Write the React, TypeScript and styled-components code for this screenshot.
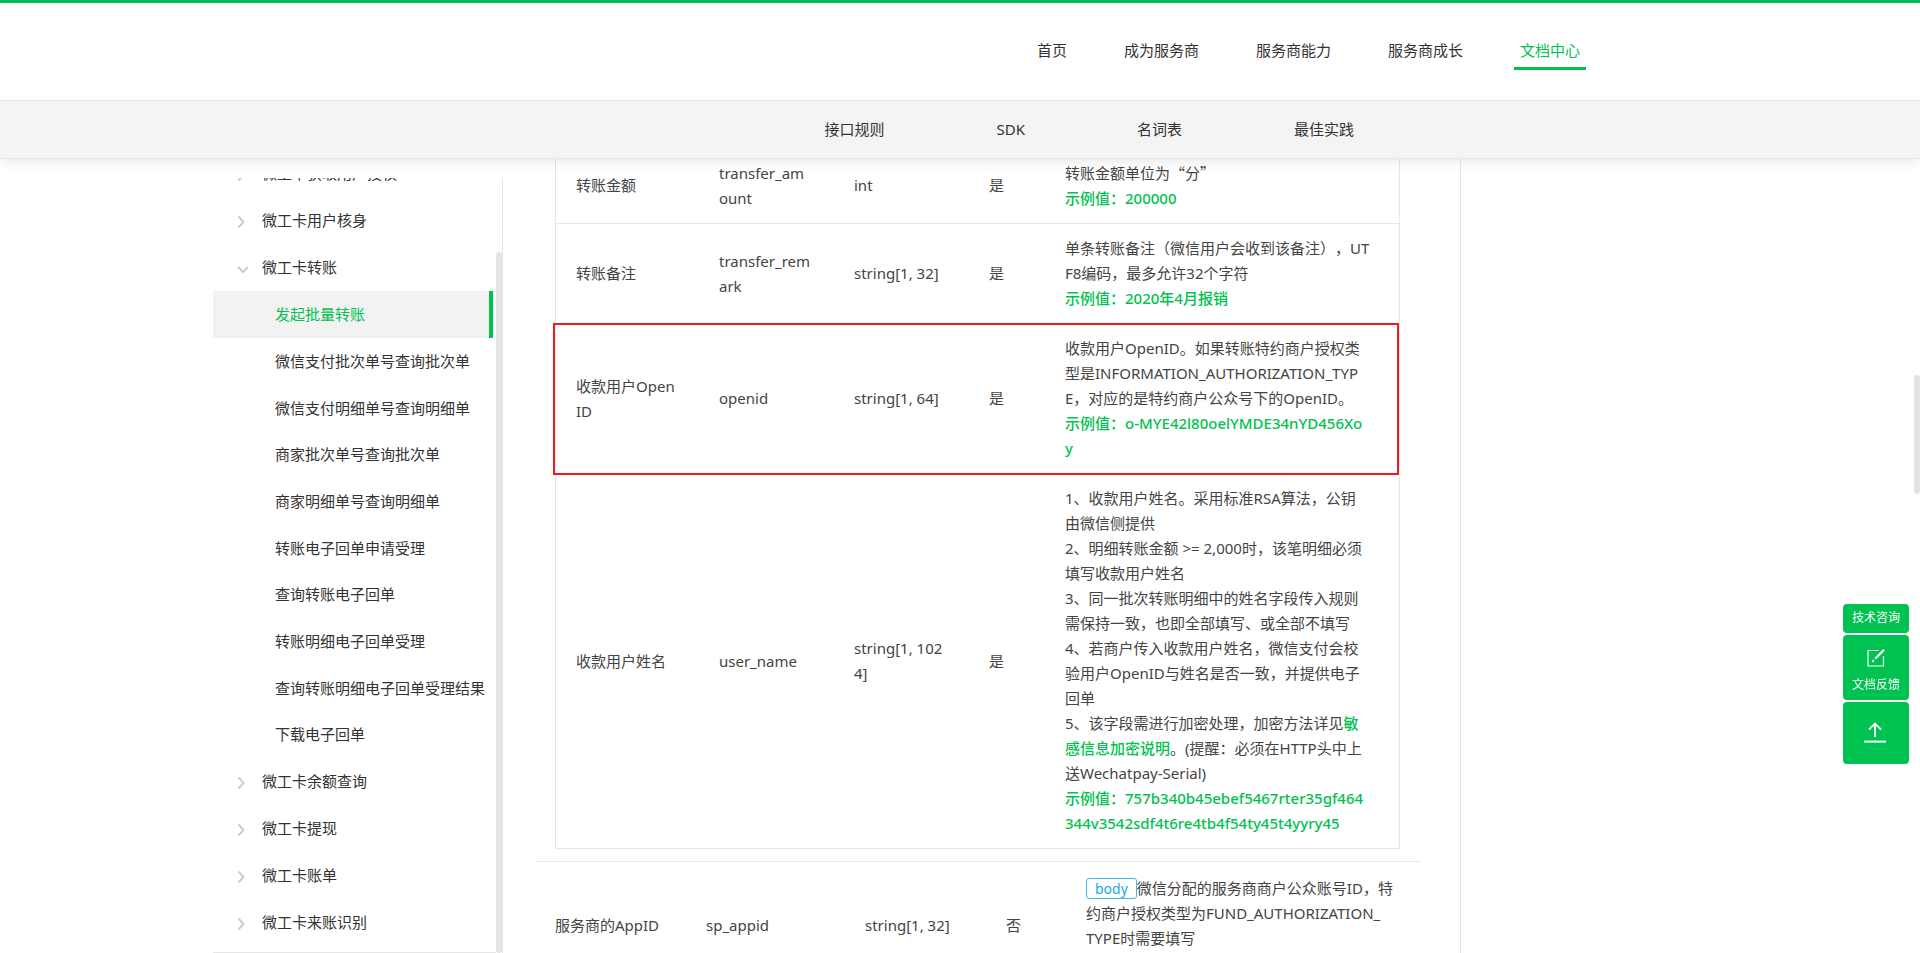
import React from "react";
import styled, { createGlobalStyle, css } from "styled-components";

const green = "#00c250";
const line = "#e7e7e7";
const cjk = `"Noto Sans CJK SC", sans-serif`;
const sans = `"Noto Sans", ${cjk}`;

const GlobalStyle = createGlobalStyle`
  *, *::before, *::after { box-sizing: border-box; }
  body {
    margin: 0;
    background: #fff;
    color: #444;
    font-family: ${sans};
    font-size: 15px;
    line-height: 25px;
    text-spacing-trim: space-all;
  }
  a { color: inherit; text-decoration: none; }
  ul { margin: 0; padding: 0; list-style: none; }
`;

const Page = styled.div`
  height: 100vh;
  overflow: hidden;
  display: flex;
  flex-direction: column;
`;

/* ---------- header ---------- */

const Header = styled.header`
  position: relative;
  z-index: 2;
  flex: none;
  border-top: 3px solid ${green};
  border-bottom: 1px solid ${line};
  background: #fff;
  box-shadow: 0 2px 12px rgba(0, 0, 0, 0.1);
`;

const MainNav = styled.nav`
  display: flex;
  justify-content: flex-end;
  align-items: flex-end;
  gap: 45px;
  max-width: 1320px;
  height: 97px;
  margin: 0 auto;
  padding: 0 34px 30px 0;
  color: #333;
`;

const MainLink = styled.a<{ $active?: boolean }>`
  padding: 0 6px 4px;
  border-bottom: 3px solid ${(p) => (p.$active ? green : "transparent")};
  color: ${(p) => (p.$active ? green : "inherit")};
`;

const SubBar = styled.div`
  border-top: 1px solid ${line};
  background: #f4f4f4;
`;

const SubNav = styled.nav`
  display: flex;
  justify-content: flex-end;
  align-items: center;
  gap: 112px;
  max-width: 1320px;
  height: 57px;
  margin: 0 auto;
  padding-right: 266px;
  color: #333;
`;

/* ---------- body ---------- */

const Body = styled.div`
  flex: 1;
  min-height: 0;
  display: flex;
  width: 100%;
  max-width: 1494px;
  margin: 0 auto;
`;

const Sidebar = styled.aside`
  position: relative;
  flex: none;
  width: 290px;
  margin-top: 19px;
  overflow: hidden;
  border-right: 1px solid ${line};
`;

const Menu = styled.ul`
  margin-top: -28px;
  padding-right: 9px;
  color: #333;
`;

const MenuFoot = styled.div`
  margin: 6px 6px 0 0;
  border-top: 1px solid ${line};
`;

const Group = styled.a`
  display: flex;
  align-items: center;
  gap: 13px;
  height: 47px;
  padding-left: 24px;
  white-space: nowrap;

  svg {
    flex: none;
    width: 12px;
    height: 14px;
    fill: none;
    stroke: #ccc;
    stroke-width: 2;
  }
`;

const Child = styled.li<{ $active?: boolean }>`
  height: 47px;
  padding-left: 62px;
  line-height: 47px;
  white-space: nowrap;

  &:nth-child(3n) { height: 46px; }

  ${(p) =>
    p.$active &&
    css`
      border-right: 4px solid ${green};
      background: #f2f2f2;
      color: ${green};
    `}
`;

const SideThumb = styled.div`
  position: absolute;
  top: 74px;
  right: 0;
  bottom: 0;
  width: 6px;
  border-radius: 3px;
  background: #e4e4e4;
`;

const Content = styled.main`
  flex: 0 1 958px;
  overflow: hidden;
  padding: 0 40px 0 33px;
  border-right: 1px solid ${line};
`;

/* ---------- tables ---------- */

const Fields = styled.table`
  width: 100%;
  table-layout: fixed;
  border-collapse: separate;
  border-spacing: 0;

  td {
    white-space: pre;
    text-align: left;
  }
`;

const NestedWrap = styled.div`
  margin-top: -11px;
  padding: 0 20px 12px 19px;
  border-bottom: 1px solid ${line};
`;

const NestedFields = styled(Fields)`
  border: solid ${line};
  border-width: 0 1px;

  td {
    padding: 12px 0 12px 20px;
    border-bottom: 1px solid ${line};
  }
`;

const OuterFields = styled(Fields)`
  td {
    height: 127px;
    padding: 14px 0 14px 19px;
  }
  td:last-child { vertical-align: top; }
`;

const FieldRow = styled.tr<{ $marked?: boolean }>`
  ${(p) =>
    p.$marked &&
    css`
      position: relative;

      td:first-child::after {
        content: "";
        position: absolute;
        inset: -1px 0 -1px -3px;
        border: 2px solid #ed1c24;
        pointer-events: none;
      }
    `}
`;

const Example = styled.div`
  color: ${green};
  font-weight: 500;
`;

const TextLink = styled.a`
  color: ${green};
  font-weight: 500;
`;

const Quoted = styled.span`
  font-family: ${cjk};
`;

const Tag = styled.span`
  display: inline-block;
  height: 21px;
  padding: 0 8px;
  border: 1px solid #3db8ee;
  border-radius: 3px;
  color: #1ba7e6;
  font-size: 14px;
  line-height: 19px;
`;

/* ---------- floating tools ---------- */

const Tools = styled.div`
  position: fixed;
  right: 11px;
  bottom: 189px;
  z-index: 3;
  display: flex;
  flex-direction: column;
  gap: 2px;
  width: 66px;
`;

const Tool = styled.button<{ $pad: string }>`
  display: flex;
  flex-direction: column;
  align-items: center;
  gap: 8px;
  padding: ${(p) => p.$pad};
  border: 0;
  border-radius: 4px;
  background: ${green};
  color: #fff;
  font: 12px/20px ${sans};
  white-space: nowrap;
`;

const PageThumb = styled.div`
  position: fixed;
  top: 375px;
  right: 0;
  z-index: 3;
  width: 6px;
  height: 119px;
  border-radius: 3px;
  background: #e4e4e4;
`;

const Chevron = ({ open }: { open?: boolean }) => (
  <svg viewBox="0 0 12 14" aria-hidden="true">
    <path d={open ? "M1 6l5 5 5-5" : "M1.5 2.5l5 5.5-5 5.5"} />
  </svg>
);

const children = [
  "发起批量转账",
  "微信支付批次单号查询批次单",
  "微信支付明细单号查询明细单",
  "商家批次单号查询批次单",
  "商家明细单号查询明细单",
  "转账电子回单申请受理",
  "查询转账电子回单",
  "转账明细电子回单受理",
  "查询转账明细电子回单受理结果",
  "下载电子回单",
];

const groups: { label: string; items?: string[] }[] = [
  { label: "微工卡获取用户授权" },
  { label: "微工卡用户核身" },
  { label: "微工卡转账", items: children },
  { label: "微工卡余额查询" },
  { label: "微工卡提现" },
  { label: "微工卡账单" },
  { label: "微工卡来账识别" },
];

const Columns = ({ widths }: { widths: number[] }) => (
  <colgroup>
    {widths.map((w, i) => (
      <col key={i} style={{ width: w }} />
    ))}
    <col />
  </colgroup>
);

const fields: { cells: string[]; marked?: boolean; desc: React.ReactNode; example: string }[] = [
  {
    cells: ["转账金额", "transfer_am\nount", "int", "是"],
    desc: (
      <>
        转账金额单位为<Quoted>“分”</Quoted>
      </>
    ),
    example: "200000",
  },
  {
    cells: ["转账备注", "transfer_rem\nark", "string[1, 32]", "是"],
    desc: "单条转账备注（微信用户会收到该备注），UT\nF8编码，最多允许32个字符",
    example: "2020年4月报销",
  },
  {
    cells: ["收款用户Open\nID", "openid", "string[1, 64]", "是"],
    marked: true,
    desc: "收款用户OpenID。如果转账特约商户授权类\n型是INFORMATION_AUTHORIZATION_TYP\nE，对应的是特约商户公众号下的OpenID。",
    example: "o-MYE42l80oelYMDE34nYD456Xo\ny",
  },
  {
    cells: ["收款用户姓名", "user_name", "string[1, 102\n4]", "是"],
    desc: (
      <>
        {"1、收款用户姓名。采用标准RSA算法，公钥\n由微信侧提供\n2、明细转账金额 >= 2,000时，该笔明细必须\n填写收款用户姓名\n3、同一批次转账明细中的姓名字段传入规则\n需保持一致，也即全部填写、或全部不填写\n4、若商户传入收款用户姓名，微信支付会校\n验用户OpenID与姓名是否一致，并提供电子\n回单\n5、该字段需进行加密处理，加密方法详见"}
        <TextLink href="#">{"敏\n感信息加密说明"}</TextLink>
        {"。(提醒：必须在HTTP头中上\n送Wechatpay-Serial)"}
      </>
    ),
    example: "757b340b45ebef5467rter35gf464\n344v3542sdf4t6re4tb4f54ty45t4yyry45",
  },
];

export default function App() {
  return (
    <Page>
      <GlobalStyle />
      <Header>
        <MainNav>
          <MainLink href="#">首页</MainLink>
          <MainLink href="#">成为服务商</MainLink>
          <MainLink href="#">服务商能力</MainLink>
          <MainLink href="#">服务商成长</MainLink>
          <MainLink href="#" $active>文档中心</MainLink>
        </MainNav>
        <SubBar>
          <SubNav>
            <a href="#">接口规则</a>
            <a href="#">SDK</a>
            <a href="#">名词表</a>
            <a href="#">最佳实践</a>
          </SubNav>
        </SubBar>
      </Header>

      <Body>
        <Sidebar>
          <Menu>
            {groups.map((g) => (
              <li key={g.label}>
                <Group href="#">
                  <Chevron open={!!g.items} />
                  {g.label}
                </Group>
                {g.items && (
                  <ul>
                    {g.items.map((label, i) => (
                      <Child key={label} $active={i === 0}>
                        <a href="#">{label}</a>
                      </Child>
                    ))}
                  </ul>
                )}
              </li>
            ))}
          </Menu>
          <MenuFoot />
          <SideThumb />
        </Sidebar>

        <Content>
          <NestedWrap>
            <NestedFields>
              <Columns widths={[143, 135, 135, 76]} />
              <tbody>
                {fields.map((f) => (
                  <FieldRow key={f.cells[0]} $marked={f.marked}>
                    {f.cells.map((c, i) => (
                      <td key={i}>{c}</td>
                    ))}
                    <td>
                      {f.desc}
                      <Example>示例值：{f.example}</Example>
                    </td>
                  </FieldRow>
                ))}
              </tbody>
            </NestedFields>
          </NestedWrap>
          <OuterFields>
            <Columns widths={[151, 159, 141, 80]} />
            <tbody>
              <tr>
                <td>服务商的AppID</td>
                <td>sp_appid</td>
                <td>string[1, 32]</td>
                <td>否</td>
                <td>
                  <Tag>body</Tag>
                  {"微信分配的服务商商户公众账号ID，特\n约商户授权类型为FUND_AUTHORIZATION_\nTYPE时需要填写"}
                </td>
              </tr>
            </tbody>
          </OuterFields>
        </Content>
      </Body>

      <Tools>
        <Tool $pad="4px 0 5px">技术咨询</Tool>
        <Tool $pad="14px 0 5px">
          <svg width="18" height="18" viewBox="0 0 18 18" fill="none" stroke="#fff" aria-hidden="true">
            <path d="M11.5 1.5H1v15.5h15.5V7" strokeWidth="1.2" />
            <path d="M17 .8L8.2 9.8" strokeWidth="2.2" />
            <path d="M6.8 11.2l-1.6 1.6" strokeWidth="2" />
          </svg>
          文档反馈
        </Tool>
        <Tool $pad="20px 0" aria-label="返回顶部">
          <svg width="24" height="22" viewBox="0 0 24 22" fill="none" stroke="#fff" aria-hidden="true">
            <path d="M11 15V1.8M5 7.5L11 1.5 17 7.5" strokeWidth="1.8" />
            <path d="M0 19.6h22" strokeWidth="2" />
          </svg>
        </Tool>
      </Tools>
      <PageThumb />
    </Page>
  );
}
